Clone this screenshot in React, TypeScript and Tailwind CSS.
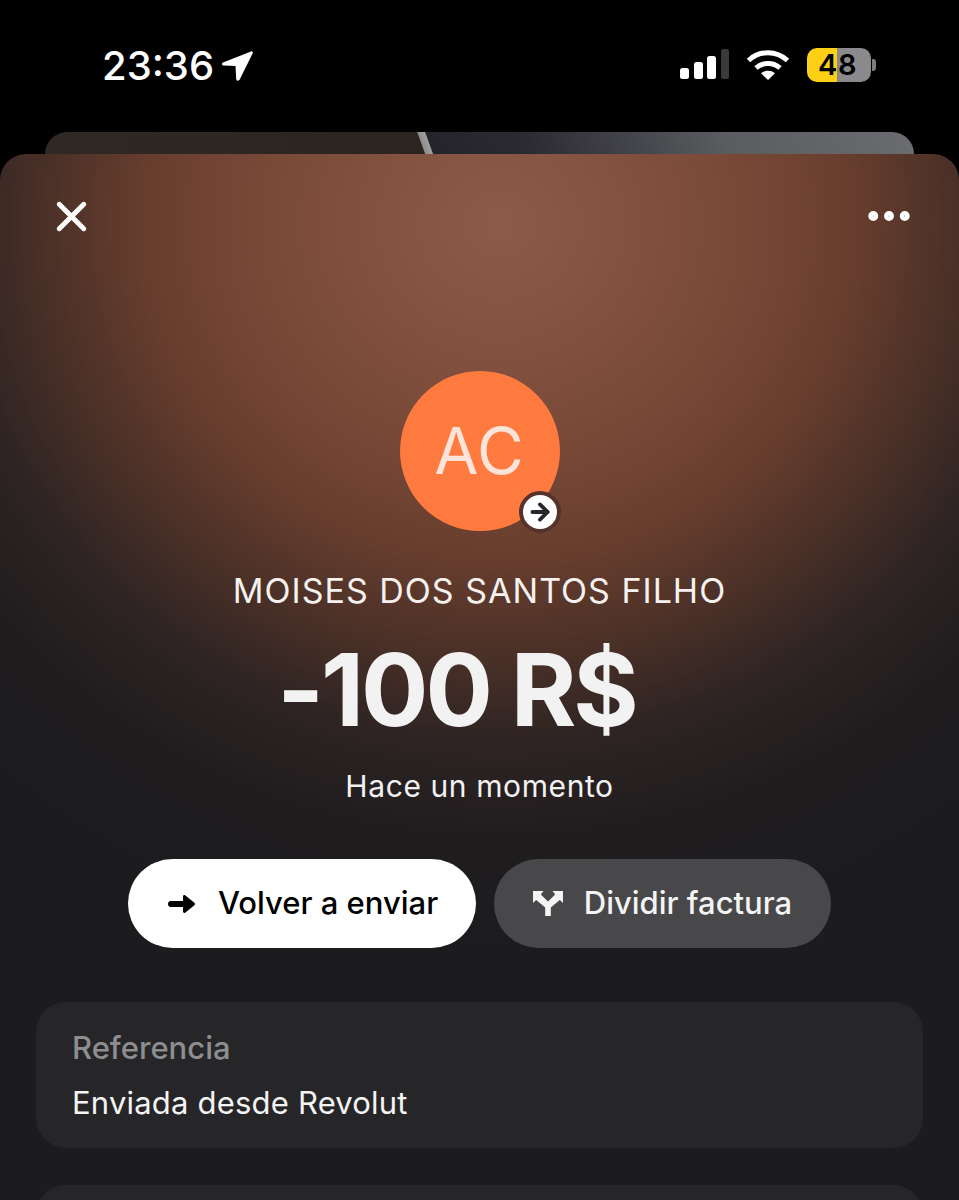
import React from 'react';
import { ArrowRight, Ellipsis, X } from 'lucide-react';

const ArrowGlyph: React.FC<{ className?: string }> = ({ className }) => (
  <svg viewBox="0 0 27 18" className={className} fill="currentColor">
    <path d="M2.600 6H15V1.400C15 .3 16.200-.4 17.100.3l9.300 7.500c.7.6.7 1.800 0 2.400l-9.300 7.500c-.9.700-2.100 0-2.100-1.100V12H2.600C1.200 12 0 10.700 0 9s1.200-3 2.600-3z" />
  </svg>
);

const SplitGlyph: React.FC<{ className?: string }> = ({ className }) => (
  <svg viewBox="0 0 30 25" className={className} fill="currentColor">
    <path d="M0 0h10.500L7.800 3.500 15 10.500l7.200-7L19.500 0H30v12l-3.200-3-9 7.500V25h-5.600v-8.500L3.200 9 0 12z" />
  </svg>
);

const StatusBar: React.FC = () => (
  <div className="flex h-[132px] items-start justify-between pl-[102px] pr-[83px] pt-[45px] text-white">
    <div className="flex items-center gap-[7px]">
      <span className="text-[40px] font-medium leading-[42px]">23:36</span>
      <svg viewBox="0 0 32 31" className="h-[31px] w-[32px]" fill="white">
        <path d="M30 .4 2 11.500c-1.700.7-1.200 3 .6 3.100l11.900.4.700 12.900c.1 2 2.700 2.400 3.500.6L31.700 2.200c.4-1.100-.6-2.200-1.700-1.800z" />
      </svg>
    </div>
    <div className="flex items-center pt-[3px]">
      <svg viewBox="0 0 49 32" className="h-[32px] w-[49px]">
        <rect x="0" y="19" width="9" height="11" rx="2.500" fill="white" />
        <rect x="14" y="13" width="9" height="17" rx="2.500" fill="white" />
        <rect x="27" y="7" width="9" height="23" rx="2.500" fill="white" />
        <rect x="41" y="0" width="8" height="30" rx="2.500" fill="#3a3a3a" />
      </svg>
      <svg viewBox="0 0 44 32" className="ml-[17px] h-[32px] w-[44px]" fill="none" stroke="white" strokeWidth="5">
        <path d="M2.500 11.500c11-10.500 28-10.500 39 0" />
        <path d="M10 19c6.500-6 17.500-6 24 0" />
        <path d="M22 31l-7-6.800c4-3.300 10-3.300 14 0z" fill="white" stroke="none" />
      </svg>
      <div className="ml-[17px] flex items-center">
        <div className="flex h-[34px] w-[64px] text-[29px] font-semibold leading-[34px] text-black">
          <span className="w-[30px] rounded-l-[10px] bg-[#fdd015] pl-[11px]">4</span>
          <span className="w-[34px] rounded-r-[10px] bg-[#8a8a8c] pl-[1px]">8</span>
        </div>
        <div className="ml-[1px] h-[12px] w-[4px] rounded-r-[3px] bg-[#7c7c7e]" />
      </div>
    </div>
  </div>
);

export default function App() {
  return (
    <div className="flex h-[1200px] w-[959px] flex-col overflow-hidden bg-black font-['Inter',sans-serif]">
      <StatusBar />
      <div className="mx-[45px] h-[22px] shrink-0 rounded-t-[22px] bg-[linear-gradient(70deg,#2f2823_0%,#2b2522_43.300%,#8d8d8b_43.400%,#a09f9c_44.200%,#24242a_44.300%,#2a2a30_55%,#5a5c60_78%,#6a6c6f_100%)]" />
      <div className="flex min-h-0 flex-1 flex-col rounded-t-[26px] bg-[radial-gradient(ellipse_760px_720px_at_500px_70px,#8d5c49_0%,#7a4a38_30%,#693e2e_46%,#4a3027_60%,#2e2423_72%,#1f1c1e_86%,#1c1c1e_100%)]">
        <div className="flex items-center justify-between pl-[47px] pr-[43px] pt-[35px]">
          <X className="h-[49px] w-[49px] text-white" strokeWidth={2.400} />
          <Ellipsis className="h-[54px] w-[54px] text-white" strokeWidth={2.400} />
        </div>

        <div className="mt-[128px] flex flex-col items-center">
          <div className="relative flex h-[160px] w-[160px] items-center justify-center rounded-full bg-[#ff7a3e] text-[64px] leading-none tracking-[1px] text-[#fde3d8]">
            AC
            <div className="absolute bottom-[-2px] right-[-1px] flex h-[42px] w-[42px] items-center justify-center rounded-full border-[4px] border-[#54332a] bg-white text-[#25272c]">
              <ArrowRight className="h-[26px] w-[26px]" strokeWidth={3.500} />
            </div>
          </div>
          <div className="mt-[40px] text-[34px] leading-[40px] tracking-[1px] text-[#f5f1ef]">MOISES DOS SANTOS FILHO</div>
          <div className="mt-[26px] pr-[46px] text-[100px] font-bold leading-[106px] tracking-[-3px] text-[#f2f2f2]">-100 R$</div>
          <div className="mt-[24px] text-[30px] leading-[38px] tracking-[0.600px] text-[#f2f2f2]">Hace un momento</div>

          <div className="mt-[54px] flex gap-[18px]">
            <div className="flex h-[89px] w-[348px] items-center gap-[23px] rounded-full bg-white pl-[40px] text-[31px] font-medium text-black">
              <ArrowGlyph className="h-[18px] w-[27px]" />
              Volver a enviar
            </div>
            <div className="flex h-[89px] w-[337px] items-center justify-center gap-[21px] rounded-full bg-[#48484a] text-[31px] font-medium text-[#f4f4f4]">
              <SplitGlyph className="h-[25px] w-[30px]" />
              Dividir factura
            </div>
          </div>
        </div>

        <div className="mx-[36px] mt-[54px] h-[146px] shrink-0 rounded-[30px] bg-[#262628] px-[36px] pt-[27px] text-[31px] leading-[38px]">
          <div className="font-medium text-[#8e8e90]">Referencia</div>
          <div className="mt-[17px] tracking-[0.200px] text-[#f4f4f4]">Enviada desde Revolut</div>
        </div>
        <div className="mx-[36px] mt-[37px] h-[146px] shrink-0 rounded-[30px] bg-[#262628]" />
      </div>
    </div>
  );
}
